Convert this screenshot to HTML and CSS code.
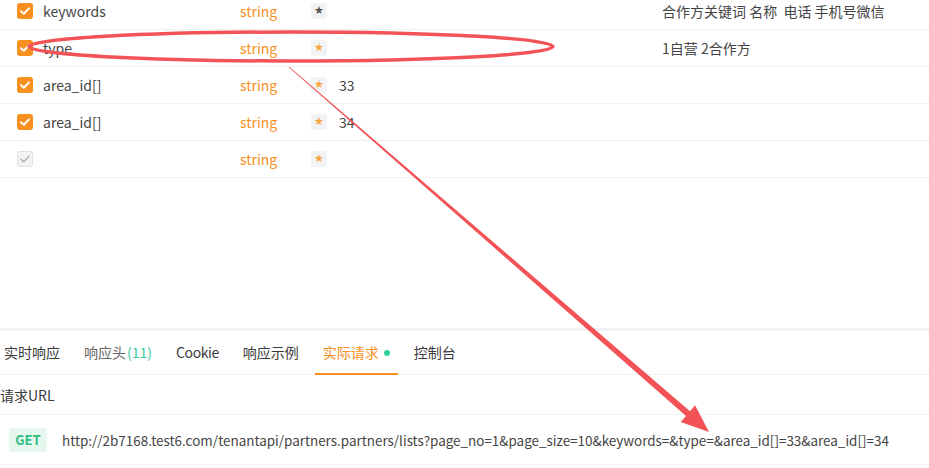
FILE: index.html
```html
<!DOCTYPE html>
<html>
<head>
  <meta charset="utf-8">
  <link rel="stylesheet" href="styles.css">
</head>
<body>
  <div class="params">
    <div class="row">
      <span class="cell-check"><span class="check on"><svg viewBox="0 0 16 16"><path d="M4 8.2l2.8 2.6L12 5.4"/></svg></span></span>
      <span class="name">keywords</span>
      <span class="type">string</span>
      <span class="val"><span class="req dark">★</span></span>
      <span class="desc">合作方关键词 名称 &nbsp;电话 手机号微信</span>
    </div>
    <div class="row">
      <span class="cell-check"><span class="check on"><svg viewBox="0 0 16 16"><path d="M4 8.2l2.8 2.6L12 5.4"/></svg></span></span>
      <span class="name">type</span>
      <span class="type">string</span>
      <span class="val"><span class="req">★</span></span>
      <span class="desc">1自营 2合作方</span>
    </div>
    <div class="row">
      <span class="cell-check"><span class="check on"><svg viewBox="0 0 16 16"><path d="M4 8.2l2.8 2.6L12 5.4"/></svg></span></span>
      <span class="name">area_id[]</span>
      <span class="type">string</span>
      <span class="val"><span class="req">★</span>33</span>
      <span class="desc"></span>
    </div>
    <div class="row">
      <span class="cell-check"><span class="check on"><svg viewBox="0 0 16 16"><path d="M4 8.2l2.8 2.6L12 5.4"/></svg></span></span>
      <span class="name">area_id[]</span>
      <span class="type">string</span>
      <span class="val"><span class="req">★</span>34</span>
      <span class="desc"></span>
    </div>
    <div class="row">
      <span class="cell-check"><span class="check off"><svg viewBox="0 0 16 16"><path d="M4 8.2l2.8 2.6L12 5.4"/></svg></span></span>
      <span class="name"></span>
      <span class="type">string</span>
      <span class="val"><span class="req">★</span></span>
      <span class="desc"></span>
    </div>
  </div>

  <div class="spacer"></div>

  <div class="panel">
    <div class="tabs">
      <span class="tab">实时响应</span>
      <span class="tab muted">响应头<em class="count">(11)</em></span>
      <span class="tab latin">Cookie</span>
      <span class="tab">响应示例</span>
      <span class="tab active">实际请求<i class="dot"></i></span>
      <span class="tab">控制台</span>
    </div>
    <div class="label">请求URL</div>
    <div class="url-row">
      <span class="method">GET</span>
      <span class="url">http://2b7168.test6.com/tenantapi/partners.partners/lists?page_no=1&amp;page_size=10&amp;keywords=&amp;type=&amp;area_id[]=33&amp;area_id[]=34</span>
    </div>
  </div>

  <!-- annotation drawn over the screenshot -->
  <svg class="annot" viewBox="0 0 929 468">
    <ellipse cx="291" cy="46.5" rx="262" ry="14.5" fill="none" stroke="#f35356" stroke-width="3.5"/>
    <polygon fill="#f35356" points="289.3,66.7 690,411.3 695.1,405.3 709,432 680.7,421.9 686,416 288.7,67.3"/>
  </svg>
</body>
</html>
```

FILE: styles.css
```css
* {
  margin: 0;
  padding: 0;
  box-sizing: border-box;
}

body {
  width: 929px;
  height: 468px;
  overflow: hidden;
  position: relative;
  background: #fff;
  font-family: "Noto Sans CJK SC", "Noto Sans", sans-serif;
  font-size: 14px;
  color: #3b3b3b;
}

/* params table */
.params {
  margin-top: -7px;
}

.row {
  display: grid;
  grid-template-columns: 43px 197px 71px 351px 1fr;
  align-items: center;
  height: 37px;
  border-bottom: 1px solid #f0f0f0;
}

.cell-check {
  padding-left: 17px;
  display: flex;
}

.check {
  width: 16px;
  height: 16px;
  border-radius: 3px;
  display: flex;
}

.check svg {
  width: 16px;
  height: 16px;
  fill: none;
  stroke-width: 2;
  stroke-linecap: round;
  stroke-linejoin: round;
}

.check.on {
  background: #f7901e;
}

.check.on svg {
  stroke: #fff;
}

.check.off {
  background: #f3f3f3;
  border: 1px solid #dedede;
}

.check.off svg {
  stroke: #b8b8b8;
  stroke-width: 1.6;
  margin: -1px;
}

.name {
  color: #444;
}

.type {
  color: #f7901e;
}

.val {
  display: flex;
  align-items: center;
  gap: 12px;
  color: #444;
}

.req {
  width: 16px;
  height: 16px;
  border-radius: 2px;
  background: #f2f3f5;
  color: #f7a53c;
  font-family: "DejaVu Sans", sans-serif;
  font-size: 11px;
  line-height: 16px;
  text-align: center;
}

.req.dark {
  color: #555;
}

.desc {
  color: #444;
}

.spacer {
  height: 150px;
}

/* response panel */
.panel {
  border-top: 3px solid #f2f2f2;
}

.tabs {
  display: flex;
  gap: 8px;
  margin-left: -4px;
  height: 44px;
  border-bottom: 1px solid #f0f0f0;
}

.tab {
  display: flex;
  align-items: center;
  padding: 0 8px;
  color: #3b3b3b;
  border-bottom: 2px solid transparent;
  margin-bottom: -1px;
}

.tab.latin {
  letter-spacing: -0.4px;
}

.tab.muted {
  color: #666;
}

.count {
  font-style: normal;
  color: #3cc8a0;
  margin-left: 1px;
}

.tab.active {
  color: #f7901e;
  border-bottom-color: #f7901e;
}

.dot {
  width: 6px;
  height: 6px;
  border-radius: 50%;
  background: #2ecf98;
  margin-left: 5px;
  margin-top: 2px;
}

.label {
  height: 40px;
  display: flex;
  align-items: center;
  border-bottom: 1px solid #f0f0f0;
}

.url-row {
  height: 50px;
  display: flex;
  align-items: center;
  padding-left: 9px;
  gap: 15px;
  border-bottom: 1px solid #f0f0f0;
}

.method {
  width: 38px;
  height: 24px;
  border-radius: 3px;
  background: #e6f7ee;
  color: #2fbd80;
  font-weight: bold;
  font-size: 13px;
  line-height: 24px;
  text-align: center;
}

.url {
  color: #444;
  font-size: 13.45px;
  white-space: nowrap;
}

.annot {
  position: absolute;
  top: 0;
  left: 0;
  width: 929px;
  height: 468px;
  pointer-events: none;
}
```
